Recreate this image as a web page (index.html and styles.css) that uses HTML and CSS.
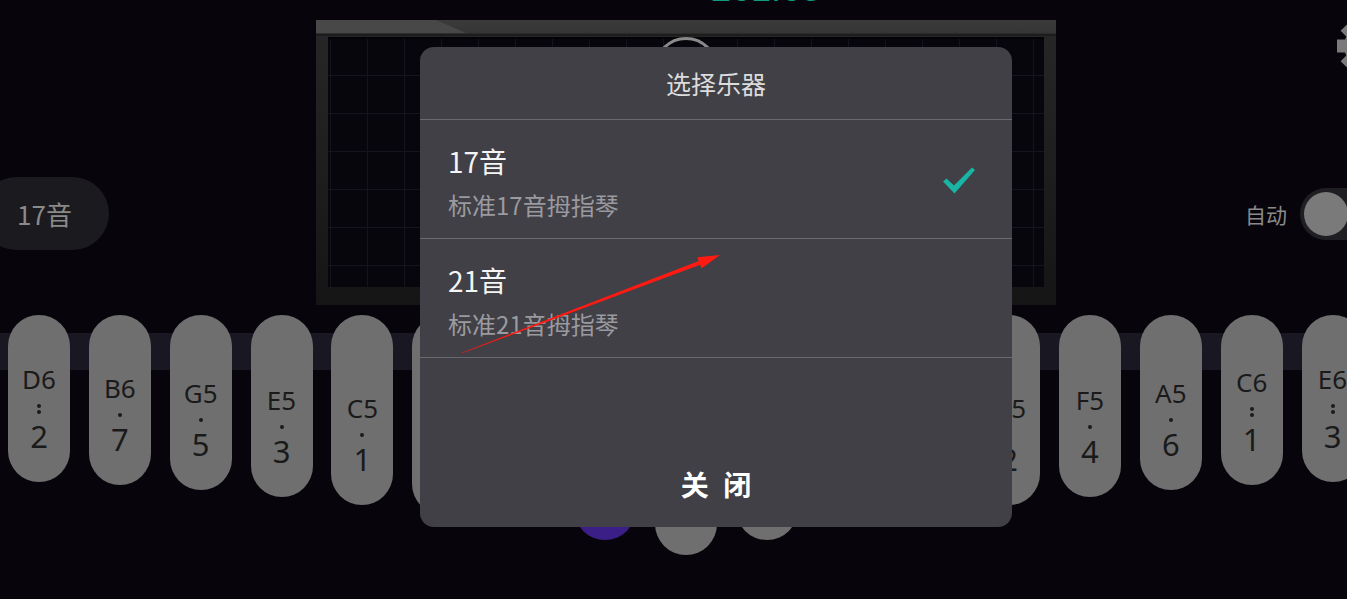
FILE: index.html
```html
<!DOCTYPE html>
<html lang="zh">
<head>
<meta charset="utf-8">
<title>选择乐器</title>
<link rel="stylesheet" href="styles.css">
</head>
<body>
<div class="app">
  <div class="readout"><span class="readout-value">261.63</span></div>

  <div class="stage">
    <div class="side side-left">
      <div class="count-pill">17音</div>
    </div>
    <div class="display">
      <div class="display-screen">
        <div class="tuner-ring"></div>
      </div>
    </div>
    <div class="side side-right">
      <span class="auto-label">自动</span>
      <div class="switch"><div class="switch-knob"></div></div>
    </div>
  </div>

  <div class="keyboard">
    <div class="key" style="height:167px"><span class="note">D6</span><span class="dots"><i></i><i></i></span><span class="num">2</span></div>
    <div class="key" style="height:170px"><span class="note">B6</span><span class="dots"><i></i></span><span class="num">7</span></div>
    <div class="key" style="height:175px"><span class="note">G5</span><span class="dots"><i></i></span><span class="num">5</span></div>
    <div class="key" style="height:182px"><span class="note">E5</span><span class="dots"><i></i></span><span class="num">3</span></div>
    <div class="key" style="height:190px"><span class="note">C5</span><span class="dots"><i></i></span><span class="num">1</span></div>
    <div class="key" style="height:200px"><span class="note">A4</span><span class="dots"></span><span class="num">6</span></div>
    <div class="key" style="height:212px"><span class="note">F4</span><span class="dots"></span><span class="num">4</span></div>
    <div class="key key-active" style="height:225px"><span class="note">D4</span><span class="dots"></span><span class="num">2</span></div>
    <div class="key" style="height:240px"><span class="note">C4</span><span class="dots"></span><span class="num">1</span></div>
    <div class="key" style="height:225px"><span class="note">E4</span><span class="dots"></span><span class="num">3</span></div>
    <div class="key" style="height:212px"><span class="note">G4</span><span class="dots"></span><span class="num">5</span></div>
    <div class="key" style="height:200px"><span class="note">B4</span><span class="dots"></span><span class="num">7</span></div>
    <div class="key" style="height:190px"><span class="note">D5</span><span class="dots"><i></i></span><span class="num">2</span></div>
    <div class="key" style="height:182px"><span class="note">F5</span><span class="dots"><i></i></span><span class="num">4</span></div>
    <div class="key" style="height:175px"><span class="note">A5</span><span class="dots"><i></i></span><span class="num">6</span></div>
    <div class="key" style="height:170px"><span class="note">C6</span><span class="dots"><i></i><i></i></span><span class="num">1</span></div>
    <div class="key" style="height:167px"><span class="note">E6</span><span class="dots"><i></i><i></i></span><span class="num">3</span></div>
  </div>

  <svg class="gear" viewBox="0 0 60 60" aria-hidden="true">
    <g fill="#7a7a7a">
      <circle cx="30" cy="30" r="21"/>
      <rect x="23.5" y="2" width="13" height="56"/>
      <rect x="23.5" y="2" width="13" height="56" transform="rotate(45 30 30)"/>
      <rect x="23.5" y="2" width="13" height="56" transform="rotate(90 30 30)"/>
      <rect x="23.5" y="2" width="13" height="56" transform="rotate(135 30 30)"/>
    </g>
    <circle cx="30" cy="30" r="8" fill="#07050b"/>
  </svg>

  <div class="modal">
    <div class="modal-title">选择乐器</div>
    <div class="option">
      <div class="option-text">
        <div class="option-name">17音</div>
        <div class="option-desc">标准17音拇指琴</div>
      </div>
      <svg class="option-check" viewBox="0 0 32 27" aria-hidden="true">
        <polygon points="0,14.5 3.5,11.5 11,18.5 29,0.5 32,3 11.5,26.5" fill="#19b4a4"/>
      </svg>
    </div>
    <div class="option">
      <div class="option-text">
        <div class="option-name">21音</div>
        <div class="option-desc">标准21音拇指琴</div>
      </div>
    </div>
    <div class="modal-close">关 闭</div>
  </div>

  <svg class="annotation" viewBox="0 0 270 110" aria-hidden="true">
    <polygon points="7.1,103.3 245.1,14.7 246.5,18.4 265,5 242.3,7.2 243.7,10.9 6.9,102.7" fill="#ff1a12"/>
  </svg>
</div>
</body>
</html>
```

FILE: styles.css
```css
* { box-sizing: border-box; }

html, body {
  margin: 0;
  padding: 0;
  background: #07050b;
}

.app {
  position: relative;
  width: 1347px;
  height: 599px;
  overflow: hidden;
  background: #07050b;
  font-family: "Noto Sans CJK SC", "Noto Sans", sans-serif;
}

/* top readout (only its lower edge is on screen) */
.readout {
  height: 20px;
  overflow: hidden;
  display: flex;
  justify-content: center;
  padding-left: 185px;
}
.readout-value {
  display: block;
  margin-top: -29px;
  font-family: "Liberation Sans", sans-serif;
  font-size: 36px;
  line-height: 36px;
  color: #129a7e;
}

/* stage row */
.stage {
  display: flex;
  height: 285px;
}
.side-left {
  width: 316px;
  flex: none;
}
.count-pill {
  margin-top: 157px;
  margin-left: -20px;
  width: 129px;
  height: 73px;
  border-radius: 37px;
  background: #1b1a1f;
  color: #8a8a8a;
  font-size: 26px;
  display: flex;
  align-items: center;
  justify-content: center;
}

.display {
  position: relative;
  width: 740px;
  height: 285px;
  flex: none;
  padding: 15px 12px 20px;
  background: linear-gradient(to bottom, #3b3b3b 0, #353535 13px, #141414 15px, #262626 16px, #151515 100%);
}
.display::before {
  content: "";
  position: absolute;
  left: 0;
  top: 0;
  width: 150px;
  height: 13px;
  background: #484848;
  clip-path: polygon(0 0, 80% 0, 100% 100%, 0 100%);
}
.display-screen {
  height: 100%;
  background-color: #08060d;
  background-image:
    linear-gradient(#15131b 1px, transparent 1px),
    linear-gradient(90deg, #15131b 1px, transparent 1px);
  background-size: 37px 38px;
  background-position: 2px 0;
  box-shadow: inset 0 2px 0 #050308;
}
.tuner-ring {
  width: 64px;
  height: 64px;
  margin: 2px auto 0;
  border: 3px solid #8a8a8a;
  border-radius: 50%;
}

.side-right {
  flex: 1;
  display: flex;
  justify-content: flex-end;
  align-items: flex-start;
  padding-top: 168px;
  gap: 13px;
}
.auto-label {
  margin-top: 12px;
  font-size: 21px;
  line-height: 28px;
  color: #8a8a8a;
}
.switch {
  width: 80px;
  height: 52px;
  margin-right: -33px;
  padding: 4px;
  border-radius: 26px;
  background: #1f1f23;
}
.switch-knob {
  width: 44px;
  height: 44px;
  border-radius: 50%;
  background: #7a7a7a;
}

/* keyboard */
.keyboard {
  margin-top: 10px;
  padding-left: 8px;
  display: flex;
  align-items: flex-start;
  gap: 18.85px;
  height: 284px;
  background: linear-gradient(to bottom, transparent 18px, #181722 18px, #181722 55px, transparent 55px);
}
.key {
  flex: none;
  width: 62px;
  border-radius: 31px;
  background: #6f6f6f;
  color: #1a1a1a;
  font-family: "Noto Sans", sans-serif;
  display: flex;
  flex-direction: column;
  align-items: center;
  justify-content: flex-end;
  padding-bottom: 35px;
}
.key-active { background: #3b1f86; }
.note {
  font-size: 26px;
  line-height: 19px;
}
.num {
  font-size: 31px;
  line-height: 22px;
}
.dots {
  display: flex;
  flex-direction: column;
  gap: 2px;
  margin: 15px 0 11px;
}
.dots i {
  display: block;
  width: 4px;
  height: 4px;
  border-radius: 50%;
  background: #1a1a1a;
}

.gear {
  position: absolute;
  left: 1335px;
  top: 16px;
  width: 60px;
  height: 60px;
}

/* modal dialog */
.modal {
  position: absolute;
  left: 420px;
  top: 47px;
  width: 592px;
  height: 480px;
  border-radius: 14px;
  background: #404046;
  display: flex;
  flex-direction: column;
  overflow: hidden;
}
.modal-title {
  height: 73px;
  flex: none;
  border-bottom: 1px solid #69696e;
  display: flex;
  align-items: center;
  justify-content: center;
  font-size: 25px;
  color: #dcdcdc;
}
.option {
  height: 119px;
  flex: none;
  border-bottom: 1px solid #69696e;
  display: flex;
  justify-content: space-between;
  align-items: flex-start;
  padding: 24px 37px 0 28px;
}
.option-name {
  font-size: 28px;
  line-height: 34px;
  color: #f5f5f5;
}
.option-desc {
  margin-top: 13px;
  font-size: 24px;
  line-height: 28px;
  color: #9a9a9f;
}
.option-check {
  width: 32px;
  height: 27px;
  margin-top: 23px;
}
.modal-close {
  margin-top: auto;
  height: 86px;
  display: flex;
  align-items: center;
  justify-content: center;
  font-size: 28px;
  font-weight: bold;
  letter-spacing: 4px;
  padding-left: 4px;
  color: #ffffff;
}

.annotation {
  position: absolute;
  left: 455px;
  top: 250px;
  width: 270px;
  height: 110px;
}
```
